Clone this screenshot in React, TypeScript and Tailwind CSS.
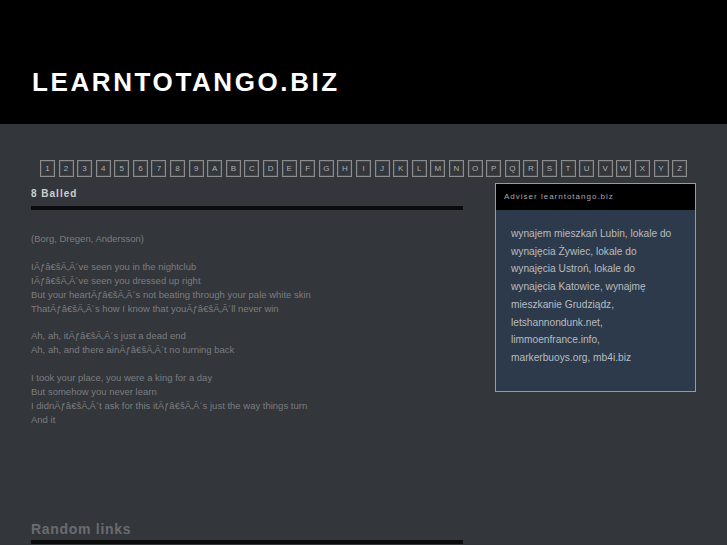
import React from "react";

const letters = "123456789ABCDEFGHIJKLMNOPQRSTUVWXYZ".split("");

const stanzas: string[][] = [
  ["(Borg, Dregen, Andersson)"],
  [
    "IÃƒâ€šÃ‚Â´ve seen you in the nightclub",
    "IÃƒâ€šÃ‚Â´ve seen you dressed up right",
    "But your heartÃƒâ€šÃ‚Â´s not beating through your pale white skin",
    "ThatÃƒâ€šÃ‚Â´s how I know that youÃƒâ€šÃ‚Â´ll never win",
  ],
  [
    "Ah, ah, itÃƒâ€šÃ‚Â´s just a dead end",
    "Ah, ah, and there ainÃƒâ€šÃ‚Â´t no turning back",
  ],
  [
    "I took your place, you were a king for a day",
    "But somehow you never learn",
    "I didnÃƒâ€šÃ‚Â´t ask for this itÃƒâ€šÃ‚Â´s just the way things turn",
    "And it",
  ],
];

export default function App() {
  return (
    <div
      className="min-h-[545px] bg-[#33363b]"
      style={{ fontFamily: '"Liberation Sans", Arial, sans-serif' }}
    >
      <header className="h-[124px] bg-black">
        <div className="w-[665px] mx-auto pt-[67px]">
          <h1 className="text-[26px] leading-[30px] font-bold tracking-[2.6px] text-white pl-px">
            LEARNTOTANGO.BIZ
          </h1>
        </div>
      </header>

      <nav className="mt-[36px] flex justify-center gap-[3.6px]">
        {letters.map((l) => (
          <a
            key={l}
            className="w-[15px] h-[17px] border border-[#8c8c8c] shadow-[inset_0_0_0_1px_#45484c] flex items-center justify-center text-[8px] text-[#b0b0b0]"
          >
            {l}
          </a>
        ))}
      </nav>

      <div className="w-[665px] mx-auto mt-[6px] flex justify-between">
        <main className="w-[432px]">
          <h2 className="mt-[4px] text-[10px] leading-[14px] font-bold tracking-[1px] text-[#cfcfcf]">
            8 Balled
          </h2>
          <div className="mt-[5px] h-[4px] bg-[#0b0b0b]" />
          <div className="mt-[22px] text-[9.5px] leading-[14px] text-[#7b7d80]">
            {stanzas.map((s, i) => (
              <div key={i} className="mb-[13.5px]">
                {s.map((line, j) => (
                  <div key={j}>{line}</div>
                ))}
              </div>
            ))}
          </div>
          <h2 className="mt-[93px] text-[14px] leading-[18px] font-bold tracking-[0.7px] text-[#6a6c70]">
            Random links
          </h2>
          <div className="mt-[2px] h-[4px] bg-[#0b0b0b]" />
        </main>

        <aside className="w-[201px] h-[209px] border border-[#9a9a9a] bg-[#2c3a4b]">
          <div className="h-[26px] bg-black flex items-center pl-[8px] text-[8px] tracking-[1px] text-[#a8a8a8]">
            Adviser learntotango.biz
          </div>
          <div className="px-[15px] pt-[15px] text-[10.2px] leading-[17.7px] text-[#b9bcc0]">
            wynajem mieszkań Lubin, lokale do wynajęcia Żywiec, lokale do
            wynajęcia Ustroń, lokale do wynajęcia Katowice, wynajmę
            mieszkanie Grudziądz, letshannondunk.net, limmoenfrance.info,
            markerbuoys.org, mb4i.biz
          </div>
        </aside>
      </div>
    </div>
  );
}
